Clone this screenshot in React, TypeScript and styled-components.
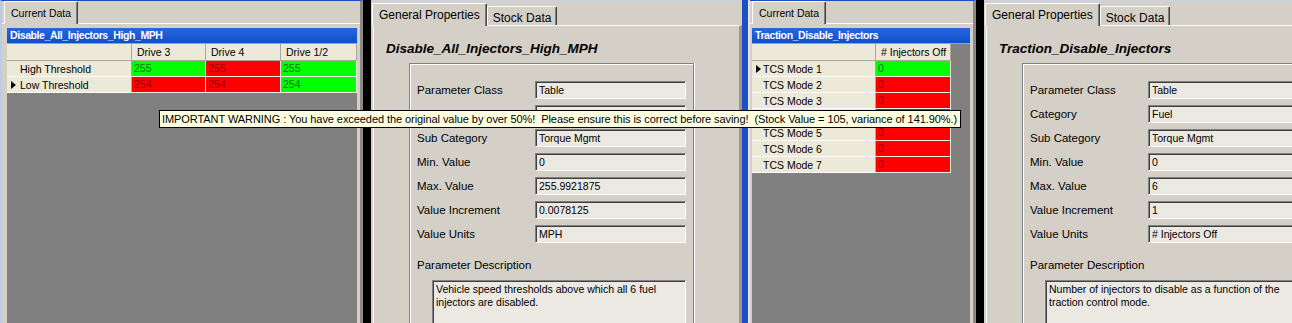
import React, { FC } from "react";
import styled, { createGlobalStyle } from "styled-components";

type Tone = "ok" | "bad";

interface IGridRow {
  label: string;
  selected?: boolean;
  cells: [string, Tone][];
}

interface IProps {
  title: string;
  fields: [string, string][];
  description: string;
}

const GlobalStyle = createGlobalStyle`
  html, body {
    margin: 0;
    padding: 0;
    background: #d4d0c8;
  }
  body {
    font-family: "Liberation Sans", Arial, sans-serif;
    color: #000;
  }
`;

const Screen = styled.div`
  position: relative;
  display: flex;
  width: 1292px;
  height: 323px;
  overflow: hidden;
  background: #d4d0c8;
`;

const Shot = styled.div<{ $width: number }>`
  display: flex;
  flex: none;
  width: ${p => p.$width}px;
  height: 100%;
  overflow: hidden;
`;

const Divider = styled.div`
  flex: none;
  width: 8px;
  box-sizing: border-box;
  background: #1f4fc4;
  border-right: 2px solid #e6e4dc;
`;

const Splitter = styled.div<{ $width: number }>`
  flex: none;
  width: ${p => p.$width}px;
  background: #000;
`;

/* ---------- data grid panel ---------- */

const DataPanel = styled.div<{ $width: number; $edge: number }>`
  flex: none;
  display: flex;
  flex-direction: column;
  width: ${p => p.$width}px;
  box-sizing: border-box;
  border-top: 1px solid #1c4cc0;
  border-left: ${p => p.$edge}px solid #b8cbe8;
  border-right: 3px solid #8c8a84;
  background: #d4d0c8;
`;

const TabStrip = styled.div<{ $height: number; $inset: number }>`
  display: flex;
  align-items: flex-end;
  height: ${p => p.$height}px;
  padding-left: ${p => p.$inset}px;
  flex: none;
`;

const Tab = styled.div<{ $active?: boolean; $size: number }>`
  box-sizing: border-box;
  height: ${p => (p.$active ? 23 : 19)}px;
  padding: ${p => (p.$active ? "3px 6px 0" : "3px 5px 0")};
  margin-bottom: ${p => (p.$active ? -1 : 0)}px;
  font-size: ${p => p.$size}px;
  line-height: 16px;
  white-space: nowrap;
  background: #d4d0c8;
  border-top: 1px solid #fff;
  border-left: 1px solid #fff;
  border-right: 1px solid #404040;
  box-shadow: inset -1px 0 #808080;
  border-radius: 2px 2px 0 0;
  position: relative;
  z-index: ${p => (p.$active ? 1 : 0)};
`;

const DataPage = styled.div<{ $inset: number }>`
  flex: 1;
  display: flex;
  padding: 4px 0 0 ${p => p.$inset}px;
  border-top: 1px solid #fff;
`;

const GridFrame = styled.div<{ $width: number }>`
  display: flex;
  flex-direction: column;
  width: ${p => p.$width}px;
  background: #808080;
`;

const Caption = styled.div`
  height: 16px;
  box-sizing: border-box;
  padding-left: 3px;
  background: linear-gradient(#2a66dc, #0c50cc);
  border-bottom: 1px solid #7fa6ee;
  color: #fff;
  font-size: 10.5px;
  font-weight: bold;
  letter-spacing: -0.4px;
  line-height: 15px;
  white-space: nowrap;
`;

const Table = styled.div<{ $columns: string }>`
  display: grid;
  grid-template-columns: ${p => p.$columns};
  align-self: flex-start;
`;

const HeadCell = styled.div`
  height: 17px;
  box-sizing: border-box;
  padding-left: 5px;
  background: #ece9d8;
  border-right: 1px solid #aca899;
  border-bottom: 1px solid #aca899;
  font-size: 10.5px;
  line-height: 16px;
  white-space: nowrap;
`;

const RowHead = styled.div`
  display: flex;
  align-items: center;
  height: 16px;
  box-sizing: border-box;
  padding-left: 4px;
  background: #ece9d8;
  border-right: 1px solid #aca899;
  border-bottom: 1px solid #fff;
  font-size: 10.5px;
  white-space: nowrap;
`;

const Marker = styled.span<{ $on?: boolean; $slot: number }>`
  flex: none;
  width: ${p => p.$slot}px;
  &::before {
    content: "";
    display: ${p => (p.$on ? "block" : "none")};
    width: 0;
    height: 0;
    border-top: 4px solid transparent;
    border-bottom: 4px solid transparent;
    border-left: 5px solid #000;
  }
`;

const DataCell = styled.div<{ $tone: Tone }>`
  height: 16px;
  box-sizing: border-box;
  padding-left: 2px;
  background: ${p => (p.$tone === "ok" ? "#00ff00" : "#ff0000")};
  color: ${p => (p.$tone === "ok" ? "#127012" : "#8e0000")};
  border-right: 1px solid #f2efe6;
  border-bottom: 1px solid #f2efe6;
  font-size: 10.5px;
  line-height: 15px;
`;

/* ---------- properties panel ---------- */

const PropsPanel = styled.div`
  flex: none;
  display: flex;
  flex-direction: column;
  width: 371px;
  background: #d4d0c8;
  border-top: 1px solid #c8d2e6;
`;

const PropsPage = styled.div`
  flex: 1;
  margin-left: 2px;
  border-top: 1px solid #fff;
  border-left: 1px solid #fff;
  border-right: 3px solid #9a978f;
  background: #d4d0c8;
`;

const Title = styled.div`
  margin: 15px 0 0 12px;
  font-size: 13.5px;
  font-weight: bold;
  font-style: italic;
  line-height: 16px;
  white-space: nowrap;
`;

const Group = styled.div`
  margin: 6px 0 0 35px;
  width: 285px;
  box-sizing: border-box;
  padding: 17px 6px 0 7px;
  border-top: 1px solid #808080;
  border-left: 1px solid #808080;
  border-right: 1px solid #808080;
  box-shadow: inset 1px 1px #fff, 1px 0 #fff;
  height: 400px;
`;

const FieldList = styled.div`
  display: flex;
  flex-direction: column;
  gap: 6px;
`;

const FieldRow = styled.div`
  display: grid;
  grid-template-columns: 118px 151px;
  align-items: center;
`;

const Label = styled.div`
  font-size: 11.5px;
  line-height: 14px;
  white-space: nowrap;
`;

const Field = styled.div`
  height: 18px;
  box-sizing: border-box;
  padding-left: 3px;
  background: #ebe9e1;
  border-top: 1px solid #808080;
  border-left: 1px solid #808080;
  border-bottom: 1px solid #fff;
  border-right: 1px solid #fff;
  box-shadow: inset 1px 1px #404040;
  font-size: 10.5px;
  line-height: 17px;
  white-space: nowrap;
  overflow: hidden;
`;

const DescLabel = styled(Label)`
  margin-top: 15px;
`;

const DescBox = styled(Field)`
  margin: 8px 0 0 15px;
  width: 254px;
  height: 60px;
  padding: 2px 2px 0 3px;
  line-height: 13px;
  white-space: normal;
`;

const Tooltip = styled.div`
  position: absolute;
  left: 159px;
  top: 110px;
  height: 18px;
  box-sizing: border-box;
  padding: 0 3px 0 2px;
  background: #ffffe1;
  border: 1px solid #000;
  font-size: 11px;
  letter-spacing: -0.07px;
  line-height: 16px;
  white-space: pre;
`;

const GridPanel: FC<{
  width: number;
  edge: number;
  tabInset: number;
  gridInset: number;
  gridWidth: number;
  markerSlot: number;
  caption: string;
  columns: string;
  heads: string[];
  rows: IGridRow[];
}> = props => {
  const { width, edge, tabInset, gridInset, gridWidth, markerSlot, caption, columns, heads, rows } = props;

  return (
    <DataPanel $width={width} $edge={edge}>
      <TabStrip $height={22} $inset={tabInset}>
        <Tab $active $size={10.5}>Current Data</Tab>
      </TabStrip>
      <DataPage $inset={gridInset}>
        <GridFrame $width={gridWidth}>
          <Caption>{caption}</Caption>
          <Table $columns={columns}>
            <HeadCell />
            {heads.map(h => (
              <HeadCell key={h}>{h}</HeadCell>
            ))}
            {rows.map(row => (
              <React.Fragment key={row.label}>
                <RowHead>
                  <Marker $on={row.selected} $slot={markerSlot} />
                  {row.label}
                </RowHead>
                {row.cells.map(([value, tone], i) => (
                  <DataCell key={i} $tone={tone}>
                    {value}
                  </DataCell>
                ))}
              </React.Fragment>
            ))}
          </Table>
        </GridFrame>
      </DataPage>
    </DataPanel>
  );
};

const PropertiesPanel: FC<IProps> = ({ title, fields, description }) => (
  <PropsPanel>
    <TabStrip $height={24} $inset={1}>
      <Tab $active $size={12}>General Properties</Tab>
      <Tab $size={12}>Stock Data</Tab>
    </TabStrip>
    <PropsPage>
      <Title>{title}</Title>
      <Group>
        <FieldList>
          {fields.map(([label, value]) => (
            <FieldRow key={label}>
              <Label>{label}</Label>
              <Field>{value}</Field>
            </FieldRow>
          ))}
        </FieldList>
        <DescLabel>Parameter Description</DescLabel>
        <DescBox>{description}</DescBox>
      </Group>
    </PropsPage>
  </PropsPanel>
);

const mphRows: IGridRow[] = [
  { label: "High Threshold", cells: [["255", "ok"], ["255", "bad"], ["255", "ok"]] },
  { label: "Low Threshold", selected: true, cells: [["254", "bad"], ["254", "bad"], ["254", "ok"]] },
];

const tcsRows: IGridRow[] = [1, 2, 3, 4, 5, 6, 7].map(n => ({
  label: `TCS Mode ${n}`,
  selected: n === 1,
  cells: [["0", n === 1 ? "ok" : "bad"]],
}));

const App: FC = () => (
  <Screen>
    <GlobalStyle />
    <Shot $width={742}>
      <GridPanel
        width={363}
        edge={2}
        tabInset={2}
        gridInset={5}
        gridWidth={350}
        markerSlot={9}
        caption="Disable_All_Injectors_High_MPH"
        columns="125px 74px 75px 76px"
        heads={["Drive 3", "Drive 4", "Drive 1/2"]}
        rows={mphRows}
      />
      <Splitter $width={8} />
      <PropertiesPanel
        title="Disable_All_Injectors_High_MPH"
        fields={[
          ["Parameter Class", "Table"],
          ["Category", "Fuel"],
          ["Sub Category", "Torque Mgmt"],
          ["Min. Value", "0"],
          ["Max. Value", "255.9921875"],
          ["Value Increment", "0.0078125"],
          ["Value Units", "MPH"],
        ]}
        description="Vehicle speed thresholds above which all 6 fuel injectors are disabled."
      />
    </Shot>
    <Divider />
    <Shot $width={542}>
      <GridPanel
        width={226}
        edge={0}
        tabInset={2}
        gridInset={2}
        gridWidth={218}
        markerSlot={7}
        caption="Traction_Disable_Injectors"
        columns="124px 75px"
        heads={["# Injectors Off"]}
        rows={tcsRows}
      />
      <Splitter $width={8} />
      <PropertiesPanel
        title="Traction_Disable_Injectors"
        fields={[
          ["Parameter Class", "Table"],
          ["Category", "Fuel"],
          ["Sub Category", "Torque Mgmt"],
          ["Min. Value", "0"],
          ["Max. Value", "6"],
          ["Value Increment", "1"],
          ["Value Units", "# Injectors Off"],
        ]}
        description="Number of injectors to disable as a function of the traction control mode."
      />
    </Shot>
    <Tooltip>
      {"IMPORTANT WARNING : You have exceeded the original value by over 50%!  Please ensure this is correct before saving!  (Stock Value = 105, variance of 141.90%.)"}
    </Tooltip>
  </Screen>
);

export default App;
